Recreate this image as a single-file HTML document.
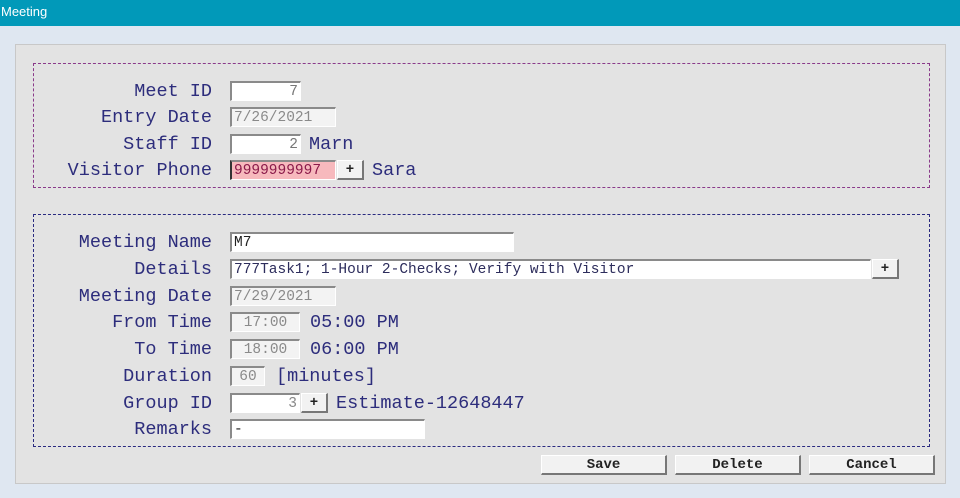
<!DOCTYPE html>
<html><head><style>
body{margin:0;width:960px;height:498px;background:#dfe7f1;position:relative;overflow:hidden;font-family:"Liberation Mono",monospace}
.t{position:absolute;left:0;top:0;width:960px;height:26px;background:#0199b9;color:#fff;font:13px "Liberation Sans",sans-serif;line-height:24px;padding-left:1px;box-sizing:border-box}
.p{position:absolute;left:15px;top:44px;width:931px;height:440px;background:#e3e3e3;border:1px solid #c8c8c8;box-sizing:border-box}
.b1{position:absolute;left:33px;top:63px;width:897px;height:125px;border:1px dashed #8a3a8a;box-sizing:border-box}
.b2{position:absolute;left:33px;top:214px;width:897px;height:233px;border:1px dashed #2a2a80;box-sizing:border-box}
.l{position:absolute;right:748px;font-size:18.5px;color:#2d2d7c;line-height:22px;white-space:pre}
.v{position:absolute;font-size:18.5px;color:#2d2d7c;line-height:22px;white-space:pre}
.i{position:absolute;height:20px;box-sizing:border-box;border:1px solid #fff;border-top:2px solid #8a8a8a;border-left:2px solid #8a8a8a;background:#fff;font-size:14.5px;line-height:19px;padding:0 2px;color:#222;white-space:pre;overflow:hidden}
.d{background:#f3f3f3;color:#8a8a8a}
.r{text-align:right}
.bt{position:absolute;height:20px;box-sizing:border-box;background:#f2f2f2;border:1px solid #fff;border-right:2px solid #777;border-bottom:2px solid #777;font-size:14px;font-weight:bold;text-align:center;line-height:19px;color:#222}
</style></head><body>
<div class="t">Meeting</div>
<div class="p"></div>
<div class="b1"></div><div class="b2"></div>

<div class="l" style="top:81px">Meet ID</div>
<div class="i r" style="left:230px;top:81px;width:71px;color:#777">7</div>
<div class="l" style="top:107px">Entry Date</div>
<div class="i d" style="left:230px;top:107px;width:106px">7/26/2021</div>
<div class="l" style="top:134px">Staff ID</div>
<div class="i r" style="left:230px;top:134px;width:71px;color:#777">2</div>
<div class="v" style="left:309px;top:134px">Marn</div>
<div class="l" style="top:160px">Visitor Phone</div>
<div class="i" style="left:230px;top:160px;width:106px;background:#f7b9bd;color:#8b1a4a;border-left-color:#333;padding-left:2px">9999999997</div>
<div class="bt" style="left:337px;top:160px;width:27px">+</div>
<div class="v" style="left:372px;top:160px">Sara</div>

<div class="l" style="top:232px">Meeting Name</div>
<div class="i" style="left:230px;top:232px;width:284px">M7</div>
<div class="l" style="top:259px">Details</div>
<div class="i" style="left:230px;top:259px;width:641px;color:#2d2d5c">777Task1; 1-Hour 2-Checks; Verify with Visitor</div>
<div class="bt" style="left:872px;top:259px;width:27px">+</div>
<div class="l" style="top:286px">Meeting Date</div>
<div class="i d" style="left:230px;top:286px;width:106px">7/29/2021</div>
<div class="l" style="top:312px">From Time</div>
<div class="i d" style="left:230px;top:312px;width:70px;text-align:center">17:00</div>
<div class="v" style="left:310px;top:312px">05:00 PM</div>
<div class="l" style="top:339px">To Time</div>
<div class="i d" style="left:230px;top:339px;width:70px;text-align:center">18:00</div>
<div class="v" style="left:310px;top:339px">06:00 PM</div>
<div class="l" style="top:366px">Duration</div>
<div class="i d" style="left:230px;top:366px;width:35px;text-align:center">60</div>
<div class="v" style="left:276px;top:366px">[minutes]</div>
<div class="l" style="top:393px">Group ID</div>
<div class="i r" style="left:230px;top:393px;width:70px;color:#888">3</div>
<div class="bt" style="left:301px;top:393px;width:27px">+</div>
<div class="v" style="left:336px;top:393px">Estimate-12648447</div>
<div class="l" style="top:419px">Remarks</div>
<div class="i" style="left:230px;top:419px;width:195px">-</div>

<div class="bt" style="left:541px;top:455px;width:126px">Save</div>
<div class="bt" style="left:675px;top:455px;width:126px">Delete</div>
<div class="bt" style="left:809px;top:455px;width:126px">Cancel</div>
</body></html>
